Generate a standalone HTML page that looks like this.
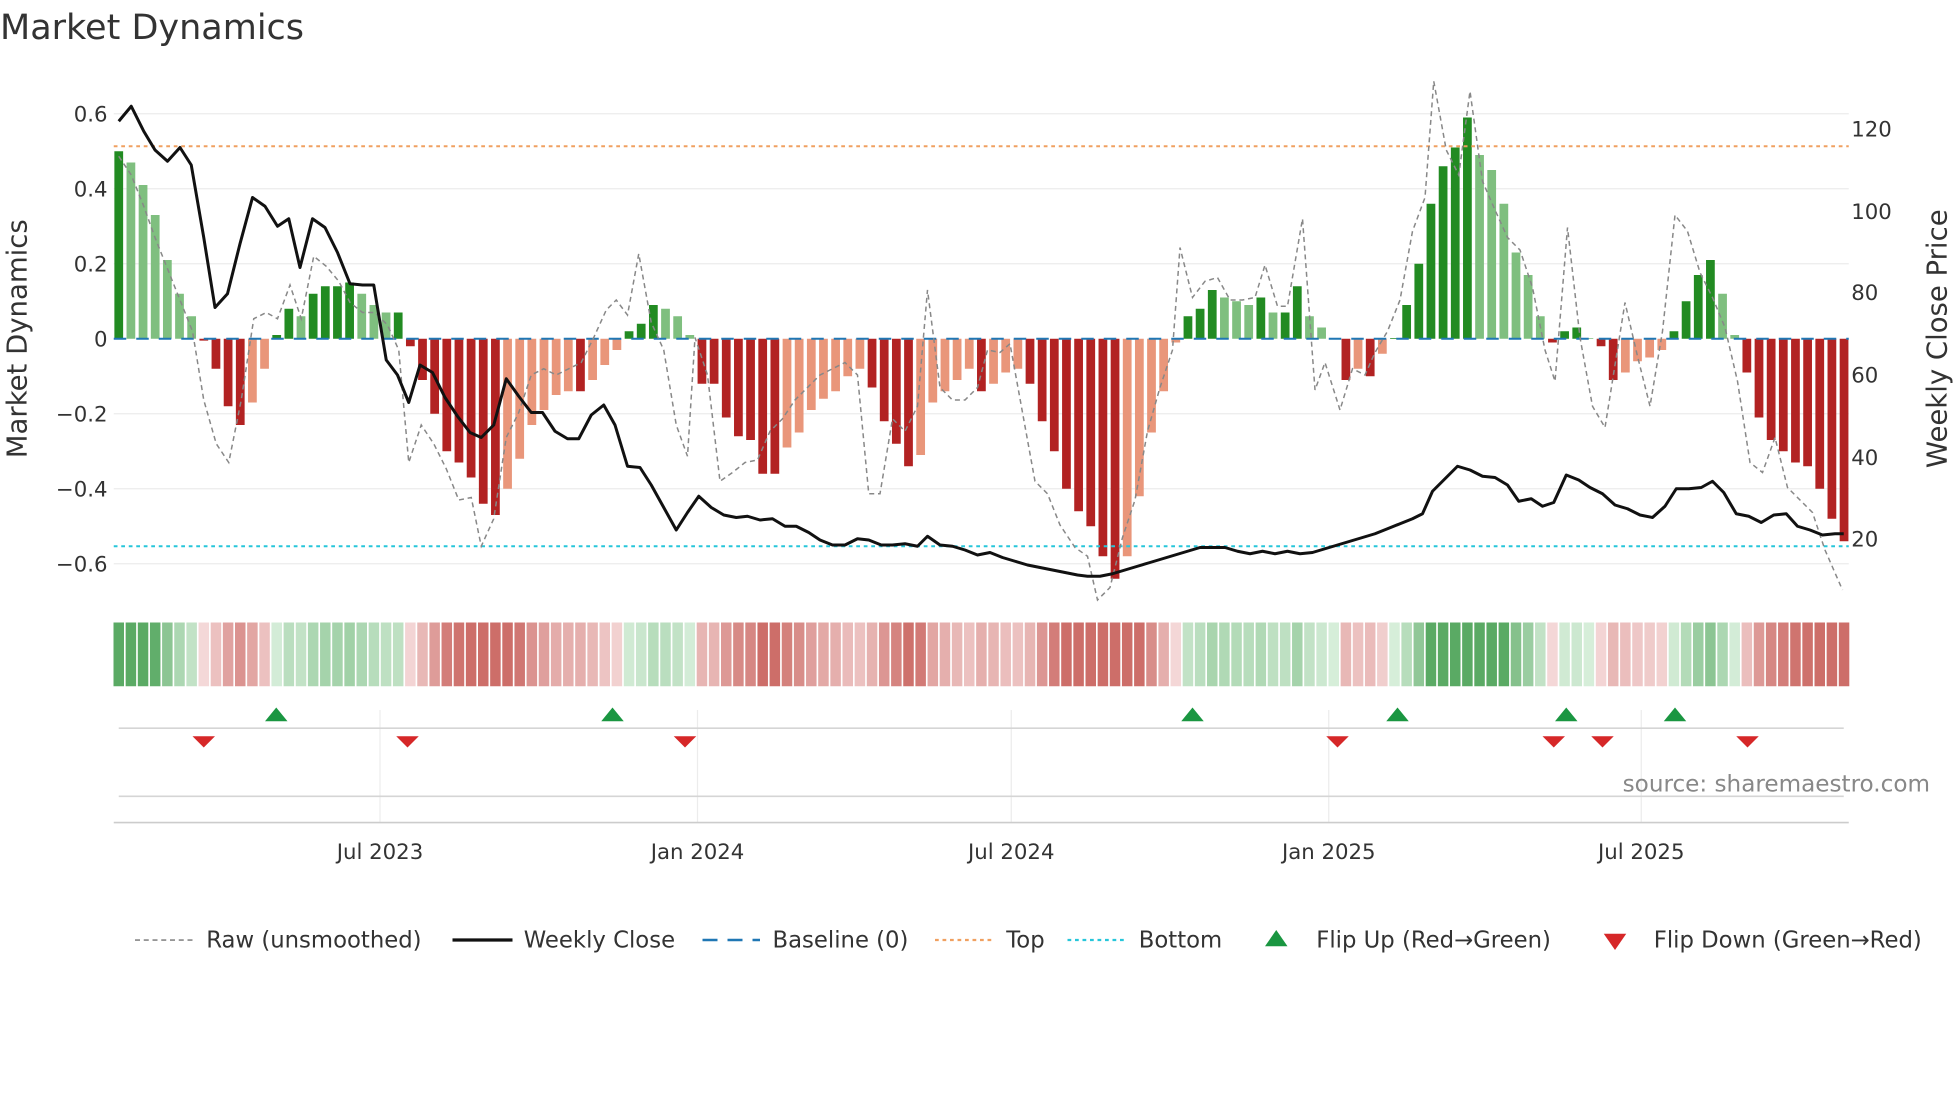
<!DOCTYPE html>
<html><head><meta charset="utf-8"><style>
html,body{margin:0;padding:0;background:#fff;width:1960px;height:1102px;overflow:hidden}
svg{display:block}
text{font-family:"DejaVu Sans","Liberation Sans",sans-serif;fill:#333}
</style></head><body>
<svg id="s" width="1960" height="1102" viewBox="0 0 1568 881.6" xmlns="http://www.w3.org/2000/svg">
<text x="0" y="31" font-size="28">Market Dynamics</text>
<g id="grid" stroke="#ebebeb" stroke-width="1">
<line x1="91" x2="1479" y1="91" y2="91"/><line x1="91" x2="1479" y1="151" y2="151"/><line x1="91" x2="1479" y1="211" y2="211"/>
<line x1="91" x2="1479" y1="331" y2="331"/><line x1="91" x2="1479" y1="391" y2="391"/><line x1="91" x2="1479" y1="451" y2="451"/>
</g>
<g font-size="17" text-anchor="end">
<text x="86" y="97">0.6</text><text x="86" y="157">0.4</text><text x="86" y="217">0.2</text><text x="86" y="277">0</text>
<text x="86" y="337">−0.2</text><text x="86" y="397">−0.4</text><text x="86" y="457">−0.6</text>
</g>
<g font-size="17">
<text x="1481" y="109">120</text><text x="1481" y="175">100</text><text x="1481" y="240">80</text><text x="1481" y="306">60</text><text x="1481" y="372">40</text><text x="1481" y="437">20</text>
</g>
<text transform="translate(21,271) rotate(-90)" font-size="22" text-anchor="middle">Market Dynamics</text>
<text transform="translate(1557,271) rotate(-90)" font-size="22" text-anchor="middle">Weekly Close Price</text>
<g id="bars"></g>
<line x1="91" x2="1479" y1="117" y2="117" stroke="#f0a060" stroke-width="1.6" stroke-dasharray="3,3"/>
<line x1="91" x2="1479" y1="437" y2="437" stroke="#26c6da" stroke-width="1.6" stroke-dasharray="3,3"/>
<line x1="91" x2="1479" y1="271" y2="271" stroke="#1f77b4" stroke-width="1.6" stroke-dasharray="10,8"/>
<polyline id="raw" fill="none" stroke="#888" stroke-width="1.2" stroke-dasharray="4,3"/>
<polyline id="close" fill="none" stroke="#111" stroke-width="2.4" stroke-linejoin="round"/>
<g id="heat"></g>
<g stroke="#ececec" stroke-width="1">
<line x1="304" x2="304" y1="568" y2="658"/><line x1="558" x2="558" y1="568" y2="658"/><line x1="809" x2="809" y1="568" y2="658"/><line x1="1063" x2="1063" y1="568" y2="658"/><line x1="1313" x2="1313" y1="568" y2="658"/>
</g>
<line x1="95" x2="1475" y1="582.5" y2="582.5" stroke="#d5d5d5" stroke-width="1.3"/>
<line x1="95" x2="1475" y1="637" y2="637" stroke="#d5d5d5" stroke-width="1.3"/>
<line x1="91" x2="1479" y1="658" y2="658" stroke="#ccc" stroke-width="1.3"/>
<g id="flips"></g>
<text x="1544" y="633" font-size="18.5" text-anchor="end" style="fill:#888">source: sharemaestro.com</text>
<g font-size="17" text-anchor="middle">
<text x="304" y="687">Jul 2023</text><text x="558" y="687">Jan 2024</text><text x="809" y="687">Jul 2024</text><text x="1063" y="687">Jan 2025</text><text x="1313" y="687">Jul 2025</text>
</g>
<g font-size="18.2">
<line x1="108" x2="154" y1="752" y2="752" stroke="#888" stroke-width="1.3" stroke-dasharray="4,3"/><text x="165" y="758">Raw (unsmoothed)</text>
<line x1="362" x2="410" y1="752" y2="752" stroke="#111" stroke-width="2.6"/><text x="419" y="758">Weekly Close</text>
<line x1="562" x2="608" y1="752" y2="752" stroke="#1f77b4" stroke-width="2" stroke-dasharray="12,8"/><text x="618" y="758">Baseline (0)</text>
<line x1="748" x2="794" y1="752" y2="752" stroke="#f0a060" stroke-width="1.8" stroke-dasharray="3,3"/><text x="805" y="758">Top</text>
<line x1="854" x2="900" y1="752" y2="752" stroke="#26c6da" stroke-width="1.8" stroke-dasharray="3,3"/><text x="911" y="758">Bottom</text>
<polygon points="1012,757 1030,757 1021,744" fill="#1a9641"/><text x="1053" y="758">Flip Up (Red→Green)</text>
<polygon points="1283,747 1301,747 1292,760" fill="#d62728"/><text x="1323" y="758">Flip Down (Green→Red)</text>
</g>
</svg>
<script>
var V=[0.50,0.47,0.41,0.33,0.21,0.12,0.06,-0.005,-0.08,-0.18,-0.23,-0.17,-0.08,0.01,0.08,0.06,0.12,0.14,0.14,0.15,0.12,0.09,0.07,0.07,-0.02,-0.11,-0.20,-0.30,-0.33,-0.37,-0.44,-0.47,-0.40,-0.32,-0.23,-0.19,-0.15,-0.14,-0.14,-0.11,-0.07,-0.03,0.02,0.04,0.09,0.08,0.06,0.01,-0.12,-0.12,-0.21,-0.26,-0.27,-0.36,-0.36,-0.29,-0.25,-0.19,-0.16,-0.14,-0.10,-0.08,-0.13,-0.22,-0.28,-0.34,-0.31,-0.17,-0.14,-0.11,-0.08,-0.14,-0.12,-0.09,-0.08,-0.12,-0.22,-0.30,-0.40,-0.46,-0.50,-0.58,-0.64,-0.58,-0.42,-0.25,-0.14,-0.01,0.06,0.08,0.13,0.11,0.10,0.09,0.11,0.07,0.07,0.14,0.06,0.03,0.002,-0.11,-0.08,-0.10,-0.04,0.002,0.09,0.20,0.36,0.46,0.51,0.59,0.49,0.45,0.36,0.23,0.17,0.06,-0.01,0.02,0.03,0.002,-0.02,-0.11,-0.09,-0.06,-0.05,-0.03,0.02,0.10,0.17,0.21,0.12,0.01,-0.09,-0.21,-0.27,-0.30,-0.33,-0.34,-0.40,-0.48,-0.54];
var NS="http://www.w3.org/2000/svg",sp=9.72,bw=7;
function el(t,a,p){var e=document.createElementNS(NS,t);for(var k in a)e.setAttribute(k,a[k]);document.getElementById(p).appendChild(e);}
function mix(a,b,t){return 'rgb('+[0,1,2].map(function(i){return Math.round(a[i]+(b[i]-a[i])*t)}).join(',')+')';}
for(var i=0;i<V.length;i++){var v=V[i],x=95+i*sp,p=i?V[i-1]:v,c;
 if(v>=0)c=(v>=p)?'#228b22':'#7fbf7f';else c=(v<=p)?'#b22222':'#e9967a';
 var y=271-v*300;el('rect',{x:x-bw/2,y:Math.min(y,271),width:bw,height:Math.max(Math.abs(v*300),0.5),fill:c},'bars');
 var t=Math.min(Math.abs(v)/0.35,1),hc=v>=0?mix([215,238,218],[90,170,100],t):mix([245,218,218],[205,110,105],t);
 el('rect',{x:x-4.2,y:498,width:8.4,height:51,fill:hc},'heat');}
var C=[95,97,105,85,115,105,124,120,134,129,144,118,153,132,163,190,172,246,182,235,192,195,202,158,212,165,222,181,231,175,240,214,250,175,260,182,270,202,280,227,290,228,299,228,309,288,318,300,327,322,336,292,346,298,356,318,366,333,376,346,385,350,395,340,405,303,415,317,425,330,434,330,444,345,454,351,463,351,473,332,483,324,492,340,502,373,512,374,521,388,531,406,541,424,550,410,559,397,569,406,579,412,589,414,598,413,608,416,618,415,628,421,637,421,647,426,656,432,666,436,676,436,686,431,695,432,705,436,714,436,724,435,734,437,742,429,752,436,762,437,772,440,782,444,792,442,802,446,812,449,822,452,832,454,842,456,852,458,862,460,870,461,880,461,890,459,900,456,910,453,920,450,930,447,940,444,950,441,960,438,970,438,980,438,990,441,1000,443,1010,441,1020,443,1030,441,1040,443,1050,442,1060,439,1070,436,1080,433,1090,430,1100,427,1110,423,1120,419,1130,415,1138,411,1146,393,1156,383,1166,373,1176,376,1186,381,1196,382,1206,388,1215,401,1225,399,1234,405,1243,402,1253,380,1263,384,1272,390,1282,395,1292,404,1302,407,1312,412,1322,414,1332,405,1341,391,1351,391,1361,390,1370,385,1379,394,1389,411,1399,413,1409,418,1419,412,1429,411,1438,421,1448,424,1458,428,1468,427,1475,427];
var R=[95,125,105,140,115,165,124,190,134,215,144,240,154,265,163,320,173,355,183,370,193,320,203,255,213,250,222,255,232,228,241,255,251,205,261,213,271,225,280,242,290,250,300,250,310,260,319,280,327,370,337,340,347,355,357,375,367,400,377,398,385,437,395,415,405,350,415,330,425,300,435,295,445,300,455,295,465,290,475,270,485,248,493,240,502,252,511,203,521,258,531,280,541,340,550,365,556,270,566,300,576,385,586,378,596,370,606,368,616,345,626,335,636,320,646,310,656,300,666,295,676,290,686,300,695,395,704,395,714,335,724,345,734,325,742,232,752,310,762,320,772,320,782,310,790,280,800,282,808,275,818,330,828,385,838,395,848,420,860,438,870,445,878,480,888,470,898,430,908,400,918,345,928,310,938,280,944,198,954,238,964,225,974,222,984,240,994,240,1004,238,1012,212,1022,245,1030,245,1042,175,1052,312,1060,290,1072,328,1082,295,1092,300,1100,282,1110,265,1120,240,1130,185,1140,158,1147,65,1157,120,1167,140,1176,73,1186,145,1196,168,1206,190,1216,200,1226,230,1236,280,1244,305,1254,182,1264,270,1274,325,1284,342,1300,242,1310,285,1320,325,1330,265,1340,172,1350,185,1360,218,1370,238,1380,262,1390,305,1400,370,1410,378,1420,350,1430,390,1440,400,1450,410,1460,440,1474,472];
function pts(a){var s=[];for(var i=0;i<a.length;i+=2)s.push(a[i]+','+a[i+1]);return s.join(' ');}
document.getElementById('close').setAttribute('points',pts(C));
document.getElementById('raw').setAttribute('points',pts(R));
[221,490,954,1118,1253,1340].forEach(function(x){el('polygon',{points:(x-9)+',577 '+(x+9)+',577 '+x+',566',fill:'#1a9641'},'flips');});
[163,326,548,1070,1243,1282,1398].forEach(function(x){el('polygon',{points:(x-9)+',589 '+(x+9)+',589 '+x+',598',fill:'#d62728'},'flips');});
</script>
</body></html>
